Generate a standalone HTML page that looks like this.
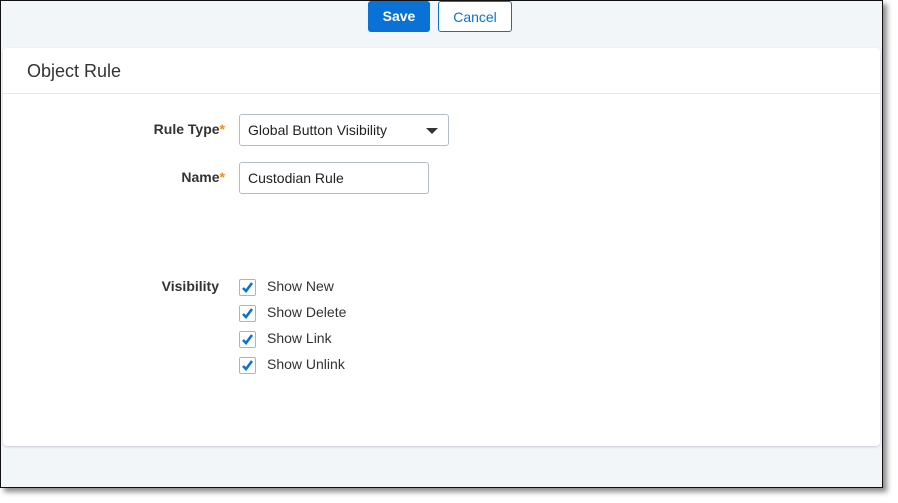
<!DOCTYPE html>
<html><head><style>
body{margin:0;width:898px;height:503px;background:#fff;font-family:"Liberation Sans",sans-serif;position:relative;overflow:hidden}
.frame{position:absolute;left:0;top:0;width:881px;height:486px;border:1px solid #111;background:#f2f6f9;box-shadow:4px 4px 5px rgba(0,0,0,.45)}
.btn{position:absolute;top:0;height:31px;border-radius:3px;font-size:14px;line-height:31px;text-align:center;box-sizing:border-box}
.save{left:367px;width:62px;background:#0a72d6;color:#fff;font-weight:bold}
.cancel{left:437px;width:74px;border:1px solid #0a72d6;background:#fff;color:#0a72d6}
.panel{position:absolute;left:2px;top:47px;width:877px;height:398px;background:#fff;border-radius:4px;box-shadow:0 1px 2px #c8ccd8}
.hdr{height:45px;border-bottom:1px solid #e3e7ec;font-size:18px;color:#333;line-height:46px;padding-left:24px}
.lbl{position:absolute;font-size:14px;font-weight:bold;color:#333;text-align:right}
.star{color:#f08a24}
.inp{position:absolute;border:1px solid #b3bcc8;border-radius:3px;box-sizing:border-box;font-size:14px;color:#222;padding-left:8px;line-height:30px}
.cb{position:absolute;left:236px;width:17px;height:17px;border:1px solid #a9b4c4;border-radius:2px;box-sizing:border-box}
.cbl{position:absolute;left:264px;font-size:14px;color:#333}
</style></head><body>
<div class="frame">
<div class="btn save">Save</div>
<div class="btn cancel">Cancel</div>
<div class="panel">
<div class="hdr">Object Rule</div>
<div class="lbl" style="left:100px;width:122px;top:73px">Rule Type<span class="star">*</span></div>
<div class="inp" style="left:236px;top:66px;width:210px;height:32px">Global Button Visibility
<svg style="position:absolute;right:10px;top:13px" width="12" height="7"><path d="M0 0H12L6 6Z" fill="#333"/></svg></div>
<div class="lbl" style="left:100px;width:122px;top:121px">Name<span class="star">*</span></div>
<div class="inp" style="left:236px;top:114px;width:190px;height:32px">Custodian Rule</div>
<div class="lbl" style="left:100px;width:116px;top:230px">Visibility</div>
<div class="cb" style="top:231px"><svg width="15" height="15"><path d="M3 8L6 11L12 3" stroke="#0a72d6" stroke-width="2.6" fill="none"/></svg></div><div class="cbl" style="top:230px">Show New</div>
<div class="cb" style="top:257px"><svg width="15" height="15"><path d="M3 8L6 11L12 3" stroke="#0a72d6" stroke-width="2.6" fill="none"/></svg></div><div class="cbl" style="top:256px">Show Delete</div>
<div class="cb" style="top:283px"><svg width="15" height="15"><path d="M3 8L6 11L12 3" stroke="#0a72d6" stroke-width="2.6" fill="none"/></svg></div><div class="cbl" style="top:282px">Show Link</div>
<div class="cb" style="top:309px"><svg width="15" height="15"><path d="M3 8L6 11L12 3" stroke="#0a72d6" stroke-width="2.6" fill="none"/></svg></div><div class="cbl" style="top:308px">Show Unlink</div>
</div>
</div>
</body></html>
